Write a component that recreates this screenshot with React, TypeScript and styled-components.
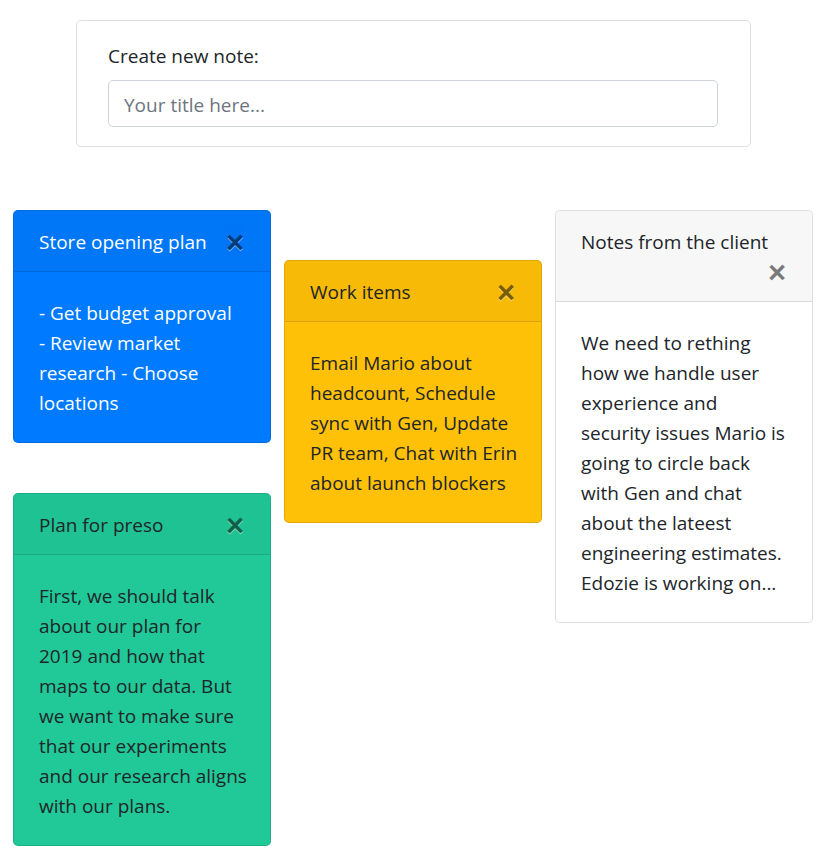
import React from "react";
import styled, { createGlobalStyle } from "styled-components";

const GlobalStyle = createGlobalStyle`
  html { font-size: 20px; }
  body {
    margin: 0;
    font-family: "Open Sans", "Noto Sans", sans-serif;
    font-size: 19px;
    line-height: 30px;
    color: #212529;
    background: #fff;
  }
  *, *::before, *::after { box-sizing: border-box; }
`;

const Page = styled.div`
  padding-top: 20px;
  padding-bottom: 16px;
`;

const FormCard = styled.div`
  width: 675px;
  margin-left: calc(50% - 338.5px);
  border: 1px solid rgba(0, 0, 0, 0.125);
  border-radius: 5px;
  padding: 19px 32px 19px 31px;
`;

const Label = styled.label`
  display: block;
  padding-top: 1px;
  margin-bottom: 9px;
`;

const Input = styled.input`
  display: block;
  width: 100%;
  height: 47px;
  padding: 8.5px 15px 6.5px;
  font: inherit;
  color: #495057;
  border: 1px solid #ced4da;
  border-radius: 5px;
  outline: none;
  &::placeholder { color: #6c757d; opacity: 1; }
`;

const Board = styled.div`
  display: flex;
  align-items: flex-start;
  gap: 13px;
  margin-top: 63px;
  padding-left: 13px;
`;

const Column = styled.div<{ $offset?: number }>`
  display: flex;
  flex-direction: column;
  gap: 50px;
  width: 258px;
  margin-top: ${(p) => p.$offset ?? 0}px;
`;

type Tone = "primary" | "warning" | "teal" | "light";

const tones: Record<Tone, { bg: string; fg: string }> = {
  primary: { bg: "#007bff", fg: "#fff" },
  warning: { bg: "#ffc107", fg: "#212529" },
  teal: { bg: "#20c997", fg: "#212529" },
  light: { bg: "#fff", fg: "#212529" },
};

const Card = styled.div<{ $tone: Tone }>`
  background: ${(p) => tones[p.$tone].bg};
  color: ${(p) => tones[p.$tone].fg};
  border: 1px solid rgba(0, 0, 0, 0.125);
  border-radius: 5px;
  overflow: hidden;
`;

const CardHeader = styled.div`
  padding: 16px 25px 14px;
  background: rgba(0, 0, 0, 0.03);
  border-bottom: 1px solid rgba(0, 0, 0, 0.125);
  &::after { content: ""; display: block; clear: both; }
`;

const Close = styled.button`
  float: right;
  width: 24px;
  height: 30px;
  padding: 0 1px 0 0;
  margin: 0;
  border: 0;
  background: transparent;
  text-align: right;
  font-family: "Liberation Sans", "DejaVu Sans", sans-serif;
  font-size: 31px;
  font-weight: 700;
  line-height: 30px;
  color: #000;
  text-shadow: 0 1px 0 #fff;
  opacity: 0.5;
  cursor: pointer;
  transform: translateY(1px);
`;

const CardBody = styled.div`
  padding: 26px 25px 24px;
`;

const Line = styled.span`
  display: block;
  white-space: nowrap;
`;

type Note = { title: string; lines: string[]; tone: Tone };

const Bubble = ({ note }: { note: Note }) => (
  <Card $tone={note.tone}>
    <CardHeader>
      {note.title}
      <Close aria-label="Close">×</Close>
    </CardHeader>
    <CardBody>
      {note.lines.map((l, i) => (
        <Line key={i}>{l}</Line>
      ))}
    </CardBody>
  </Card>
);

const notes: Record<string, Note> = {
  store: {
    title: "Store opening plan",
    lines: ["- Get budget approval", "- Review market", "research - Choose", "locations"],
    tone: "primary",
  },
  preso: {
    title: "Plan for preso",
    lines: [
      "First, we should talk",
      "about our plan for",
      "2019 and how that",
      "maps to our data. But",
      "we want to make sure",
      "that our experiments",
      "and our research aligns",
      "with our plans.",
    ],
    tone: "teal",
  },
  work: {
    title: "Work items",
    lines: [
      "Email Mario about",
      "headcount, Schedule",
      "sync with Gen, Update",
      "PR team, Chat with Erin",
      "about launch blockers",
    ],
    tone: "warning",
  },
  client: {
    title: "Notes from the client",
    lines: [
      "We need to rething",
      "how we handle user",
      "experience and",
      "security issues Mario is",
      "going to circle back",
      "with Gen and chat",
      "about the lateest",
      "engineering estimates.",
      "Edozie is working on...",
    ],
    tone: "light",
  },
};

export default function App() {
  return (
    <Page>
      <GlobalStyle />
      <FormCard>
        <Label htmlFor="title">Create new note:</Label>
        <Input id="title" placeholder="Your title here..." />
      </FormCard>
      <Board>
        <Column>
          <Bubble note={notes.store} />
          <Bubble note={notes.preso} />
        </Column>
        <Column $offset={50}>
          <Bubble note={notes.work} />
        </Column>
        <Column>
          <Bubble note={notes.client} />
        </Column>
      </Board>
    </Page>
  );
}
